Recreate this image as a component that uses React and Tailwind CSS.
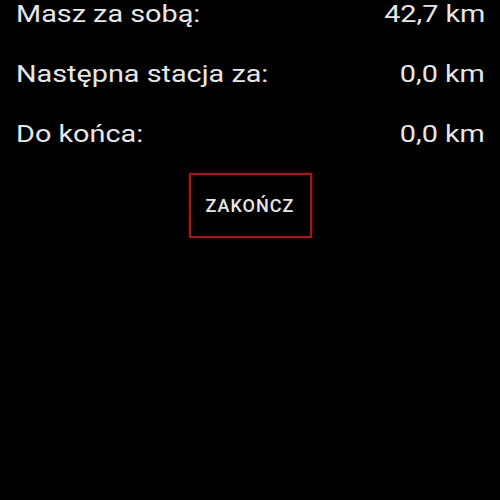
export default function App() {
  const rows = [
    { label: 'Masz za sobą:', value: '42,7 km' },
    { label: 'Następna stacja za:', value: '0,0 km' },
    { label: 'Do końca:', value: '0,0 km' },
  ]

  return (
    <div className="w-[500px] h-[500px] bg-black text-[#e6e6e6] font-['Roboto',sans-serif] overflow-hidden">
      <div className="flex flex-col gap-8 pl-4 pr-[15px]">
        {rows.map((r) => (
          <div key={r.label} className="flex justify-between text-[24px] leading-[28px]">
            {/* the screenshot is stretched wide, so the text is too */}
            <span className="origin-left scale-x-[1.2]">{r.label}</span>
            <span className="origin-right scale-x-[1.2]">{r.value}</span>
          </div>
        ))}
      </div>
      <div className="flex justify-center mt-[25px]">
        <button className="w-[123px] h-[65px] border-2 border-[#a31818] shadow-[0_0_3px_rgba(200,20,20,0.5)] text-[18px] font-medium tracking-[1px] text-[#e6e6e6]">
          ZAKOŃCZ
        </button>
      </div>
    </div>
  )
}
